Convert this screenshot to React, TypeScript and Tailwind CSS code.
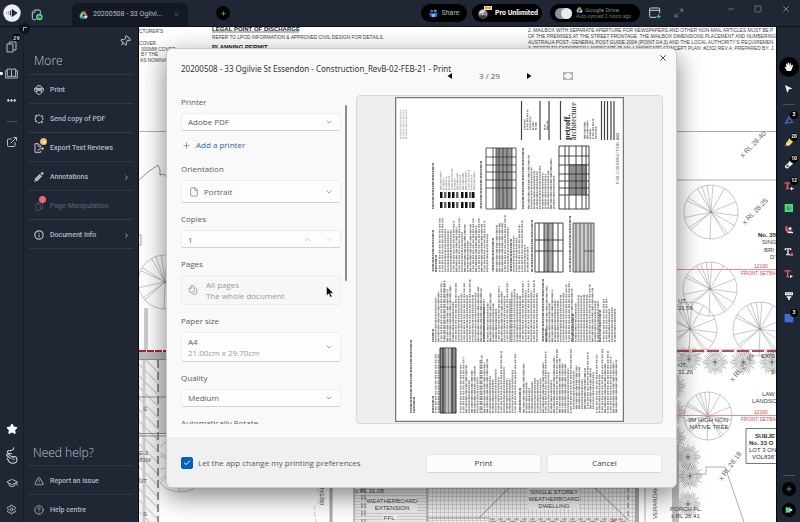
import { useState, type ReactNode } from "react";
import {
  Check, ChevronDown, ChevronRight, ChevronUp, CircleHelp, Ellipsis, ExternalLink, File, Files,
  GraduationCap, Info, Maximize2, Minus, Pin, Plus, Settings, Square, Star, TriangleAlert, X,
} from "lucide-react";

const DOC_NAME = "20200508 - 33 Ogilvie St Essendon - Construction_RevB-02-FEB-21";

/* Small drawn icons */

function DriveIcon({ className }: { className: string }) {
  return (
    <svg viewBox="0 0 30 27" className={className} aria-hidden="true">
      <path d="M10 1h10l-5 9z" fill="#35b46a" />
      <path d="M10 1l5 9-9 16-5-9z" fill="#58d98b" />
      <path d="M20 1l9 16H19l-6-10z" fill="#e8615f" />
      <path d="M11 17h18l-5 9H6z" fill="#4e8df5" />
      <path d="M19 17h10l-5 9-6-5z" fill="#f3dede" />
    </svg>
  );
}

function LogoIcon() {
  return (
    <svg viewBox="0 0 54 54" className="size-[18px]" aria-hidden="true">
      <circle cx="27" cy="27" r="26" fill="#eef0f4" />
      <path d="M11 24v6M16 21v12" stroke="#a3aaba" strokeWidth="3" />
      <path d="M20 23l5-7v22l-5-7z" fill="#3b4770" />
      <path d="M27 15l17 12-17 12z" fill="#101a38" />
      <path d="M32 24l5 3-5 3z" fill="#5f6c92" />
    </svg>
  );
}

function HomeDocIcon() {
  return (
    <svg viewBox="0 0 36 36" className="size-3" fill="none" aria-hidden="true">
      <path d="M15 32H8a4 4 0 0 1-4-4V10l7-7h13a4 4 0 0 1 4 4v7" stroke="#c9ced8" strokeWidth="3" />
      <path d="M4 11h8V4" stroke="#c9ced8" strokeWidth="2" />
      <circle cx="25" cy="24" r="10" fill="#4fd886" />
      <path d="M20 24h9M25 20l4 4-4 4" stroke="#14251c" strokeWidth="3" />
    </svg>
  );
}

function PagesIcon({ className }: { className: string }) {
  return (
    <svg viewBox="0 0 36 36" className={className} fill="none" stroke="currentColor" strokeWidth="3" strokeLinejoin="round" aria-hidden="true">
      <path d="M3 9h18v24H3z" />
      <path d="M10 9V3h20v24h-9" />
    </svg>
  );
}

function ReaderIcon() {
  return (
    <svg viewBox="0 0 39 33" className="h-[11px] w-[13px]" fill="none" stroke="currentColor" strokeWidth="3" strokeLinejoin="round" aria-hidden="true">
      <path d="M7 3h9c2 0 3 1 3.500 3C20 4 21 3 23 3h9v22h-9c-2 0-3 1-3.500 2-.5-1-1.500-2-3.500-2H7zM19.500 6v20" />
      <path d="M6 8H2v22h14l3.500 1 3.500-1h14V8h-4" />
    </svg>
  );
}

function PrintIcon() {
  return (
    <svg viewBox="0 0 30 30" className="size-[10px]" fill="none" stroke="#c3c8d1" strokeWidth="3" aria-hidden="true">
      <path d="M6 9c1-5 4-7 9-7s8 2 9 7" />
      <path d="M2 10h26v7c0 2-1 3-3 3H5c-2 0-3-1-3-3z" />
      <path d="M8 17h14v6c-1 4-3 5-7 5s-6-1-7-5z" fill="#1f2735" />
      <path d="M5 13h20" />
    </svg>
  );
}

function SendIcon() {
  return (
    <svg viewBox="0 0 30 30" className="size-[10px]" fill="none" stroke="#c3c8d1" strokeWidth="3" aria-hidden="true">
      <path d="M10 4a12 12 0 0 1 9 0M26 11a12 12 0 0 1 0 8M19 26a12 12 0 0 1-8 0M4 18a12 12 0 0 1 1-9" />
      <circle cx="7" cy="6" r="2" fill="#c3c8d1" />
      <circle cx="24" cy="7" r="2" fill="#c3c8d1" />
      <circle cx="23" cy="24" r="2" fill="#c3c8d1" />
      <circle cx="6" cy="22" r="2" fill="#c3c8d1" />
    </svg>
  );
}

function ExportIcon() {
  return (
    <svg viewBox="0 0 30 30" className="size-[10px]" fill="none" stroke="#c3c8d1" strokeWidth="3" aria-hidden="true">
      <path d="M20 13V9l-7-7H3v26h17v-4" />
      <path d="M12 3v8h8" strokeWidth="2" />
      <path d="M12 24c1-5 4-7 9-7h7M24 12l5 5-5 5" />
    </svg>
  );
}

function PenIcon() {
  return (
    <svg viewBox="0 0 30 30" className="size-[10px]" aria-hidden="true">
      <path d="M1 29l3-10L17 6l7 7-13 13z" fill="#c3c8d1" />
      <path d="M19 4c3-3 6-4 9-3 1 3 0 6-3 9z" fill="#c3c8d1" />
      <path d="M4 26L19 11" stroke="#1f2735" strokeWidth="1" />
    </svg>
  );
}

function GestureIcon() {
  return (
    <svg viewBox="0 0 38 50" className="h-[17px] w-[13px]" fill="none" stroke="#d5d8de" strokeWidth="3" strokeLinecap="round" strokeLinejoin="round" aria-hidden="true">
      <path d="M25 2c1 7-4 8-10 8-7 0-10 3-8 7 2 3 8 2 12 2" />
      <path d="M15 33L5 25c-2-3 1-5 4-4l11 8 8-1c5 1 7 4 7 9 0 7-5 11-12 11-7 0-11-3-13-8l-4-7" />
      <path d="M19 34l6-3M23 38l5-2" strokeWidth="2" />
    </svg>
  );
}

function HandIcon() {
  return (
    <svg viewBox="0 0 30 30" className="size-[10px]" aria-hidden="true">
      <path d="M9 27C6 22 3 19 2 15c1-2 3-1 5 2L6 7c0-3 3-3 4 0l1 5V4c0-3 4-3 4 0v8l2-7c1-3 4-2 4 1l-1 8 3-5c1-2 4-1 4 1-1 6-3 12-6 17z" fill="#f3f4f6" />
    </svg>
  );
}

function PointerIcon() {
  return (
    <svg viewBox="0 0 30 30" className="size-[10px]" aria-hidden="true">
      <path d="M3 3l23 11-11 2-5 11z" fill="#f3f4f6" />
    </svg>
  );
}

/* Right-hand tool glyphs, all on a 30 x 30 grid */
const TOOLS: { name: string; count?: string; draw: ReactNode }[] = [
  { name: "Shapes", count: "3", draw: <path d="M3 25L15 5l11 17zM11 22c-1-6 3-10 9-8" fill="none" stroke="#4a73cf" strokeWidth="3" strokeLinejoin="round" /> },
  { name: "Highlight", count: "20", draw: <><path d="M8 17l8-13 11 10-9 10z" fill="#f5d94f" /><path d="M8 16l10 8-4 3-9-5z" fill="#f4f4f4" /><path d="M1 28l4-6 7 4z" fill="#e8615f" /></> },
  { name: "Eraser", count: "10", draw: <><path d="M3 21L18 6l9 8-15 14c-4 2-11-2-9-7z" fill="#f4f4f4" /><path d="M9 16l9 8" stroke="#39425a" strokeWidth="2" /><circle cx="10" cy="22" r="3" fill="#39425a" /></> },
  { name: "Insert text", count: "12", draw: <><path d="M2 4h17v6h-2l-1-3h-3v15h3v3H5v-3h3V7H5l-1 3H2z" fill="#e8615f" /><path d="M18 23h11M23 18v10" stroke="#f4f4f4" strokeWidth="3" /></> },
  { name: "Note", draw: <><path d="M2 3h25v24H2z" fill="#4fd886" /><path d="M8 9l5 4 6-5M9 20h10M13 13v7M6 15h4M18 15h5" fill="none" stroke="#1d5a38" strokeWidth="2" /></> },
  { name: "Draw", draw: <><path d="M5 3h5v8l7 9-5 5L3 14z" fill="#e8615f" /><path d="M12 9l9-3 2 6-5 5zM10 24c5-5 11-5 17-3v4z" fill="#f4f4f4" /></> },
  { name: "Strike text", draw: <><path d="M2 4h20v6h-3l-1-3h-4v15h4v3H6v-3h4V7H6l-1 3H2z" fill="#f4f4f4" /><path d="M19 20l8-3v10h-9z" fill="#e8615f" /></> },
  { name: "Replace text", draw: <><path d="M2 4h18v6h-2l-1-3h-4v15h3v3H6v-3h3V7H5l-1 3H2z" fill="#e8615f" /><path d="M18 18l9 4-9 5z" fill="#f4f4f4" /></> },
  { name: "Callout", draw: <><path d="M3 4h24v9H3zM8 16h14v4H8zM12 20h6v6h-6z" fill="#f4f4f4" /><path d="M7 8h4M14 8h4M20 8h4" stroke="#39425a" strokeWidth="2" /></> },
  { name: "Stamp", count: "3", draw: <path d="M2 3h26v25H2z" fill="#3c6fd6" /> },
];

/* Site plan behind the dialog */

const SPOKES = [8, 30, 52, 58, 92, 138, 144, 168, 205, 212, 240, 250, 262, 274, 300, 338];

function Tree({ x, y, r }: { x: number; y: number; r: number }) {
  return (
    <g stroke="#a3a3a3" strokeWidth="0.6" fill="none">
      <circle cx={x} cy={y} r={r} />
      {SPOKES.map(a => {
        const t = (a * Math.PI) / 180;
        return <path key={a} d={`M${x} ${y}L${x + r * Math.cos(t)} ${y + r * Math.sin(t)}`} />;
      })}
      <circle cx={x} cy={y} r="1" fill="#777" />
    </g>
  );
}

function Shrub({ x, y }: { x: number; y: number }) {
  return (
    <g stroke="#8a8a8a" strokeWidth="0.6">
      {Array.from({ length: 36 }, (_, i) => {
        const t = (i * Math.PI) / 18;
        const r = i % 3 === 0 ? 13 : i % 2 ? 12 : 10;
        const r0 = i % 2 ? 6 : 2;
        return <path key={i} d={`M${x + r0 * Math.cos(t)} ${y + r0 * Math.sin(t)}L${x + r * Math.cos(t)} ${y + r * Math.sin(t)}`} />;
      })}
      <circle cx={x} cy={y} r="1.5" fill="#777" />
    </g>
  );
}

function SitePlan() {
  return (
    <svg viewBox="139 27 637 495" preserveAspectRatio="xMinYMin slice" className="block size-full bg-white" style={{ fontFamily: '"Liberation Sans", sans-serif' }} role="img" aria-label="Site plan">
      <defs>
        <pattern id="hatch" width="8" height="8" patternUnits="userSpaceOnUse" patternTransform="rotate(-45)">
          <path d="M0 0V8" stroke="#8a8a8a" strokeWidth="1" />
        </pattern>
        <pattern id="deck" width="4" height="4" patternUnits="userSpaceOnUse">
          <path d="M0 0V4M0 0H4" stroke="#9a9a9a" strokeWidth="0.7" />
        </pattern>
        <pattern id="boards" width="4" height="3" patternUnits="userSpaceOnUse">
          <path d="M0 0H4" stroke="#b0b0b0" strokeWidth="1" />
        </pattern>
      </defs>

      {/* notes */}
      <g fontSize="4.8" fill="#444">
        <text x="139" y="33">CTURER'S</text>
        <text x="139" y="45">COVER.</text>
        <text x="141" y="51">300MM COVER</text>
        <text x="141" y="56">BY THE</text>
        <text x="140" y="62">AS NOMINATED</text>
        <text x="212" y="31" fontSize="6" fontWeight="bold" fill="#222">LEGAL POINT OF DISCHARGE</text>
        <path d="M212 32H299" stroke="#222" strokeWidth="0.6" />
        <text x="212" y="39">REFER TO LPOD INFORMATION &amp; APPROVED CIVIL DESIGN FOR DETAILS.</text>
        <text x="212" y="49" fontSize="6" fontWeight="bold" fill="#222">PLANNING PERMIT</text>
        <text x="528" y="32">2. MAILBOX WITH SEPARATE APERTURE FOR NEWSPAPERS AND OTHER NON-MAIL ARTICLES MUST BE P</text>
        <text x="528" y="38">OF THE PREMISES AT THE STREET FRONTAGE. THE MAILBOX DIMENSIONS PLACEMENT AND NUMBERING</text>
        <text x="528" y="44">AUSTRALIA POST- GENERAL POST GUIDE 2004 (POINT G4.3) AND THE LOCAL AUTHORITY'S REQUIREMEN</text>
        <text x="528" y="50">3. REFER TO ENDORSED LANDSCAPE PLAN. LANDSCAPE CONCEPT PLAN: #2302 REV A; PREPARED BY: J.</text>
      </g>

      {/* left edge */}
      <g fill="none" stroke="#999">
        <path d="M139 131.500H170M677 131.500H776M677 180H776" strokeWidth="0.8" />
        <path d="M139 180L148 172L158 165L160 170L160 175L164 174L167 178" stroke="#777" strokeWidth="0.8" />
        <path d="M139 235h2v10h-2" />
      </g>
      <Tree x={165} y={282} r={27} />
      <Tree x={180} y={465} r={27} />
      <path d="M144 308h4v43h-4z" fill="#ccc" />
      <path d="M139 352H160V522H139z" fill="#f4f4f4" />
      <path d="M139 352H158V522H139z" fill="url(#hatch)" />
      <path d="M158 360H170V434H158z" fill="#ddd" />
      <path d="M139 352H170V359H139z" fill="#bbb" />
      <path d="M158 360V522" stroke="#333" strokeDasharray="8 4" />
      <path d="M144 360V522" stroke="#ccc" strokeWidth="3" />
      <path d="M139 351H170" stroke="#b3202a" strokeWidth="2" strokeDasharray="7 1" />
      <path d="M139 359.500H170M139 433.500H170M139 436H170M139 397H166" stroke="#777" strokeWidth="0.8" />
      <g fontSize="6" fill="#555">
        <text x="143" y="411">S</text>
        <text x="143" y="516">S</text>
        <text x="139" y="455">E-1</text>
        <text x="139" y="462">83M</text>
        <text x="139" y="483">UT</text>
      </g>

      {/* bottom strip */}
      <path d="M331 487V522" stroke="#aaa" strokeWidth="3" />
      <path d="M317 488L322 498L314 508L316 522" stroke="#aaa" fill="none" strokeWidth="0.6" strokeDasharray="5 2" />
      <text transform="translate(324 505) rotate(-90)" fontSize="6" fill="#444">RETAI</text>
      <path d="M354 485H427V522H354z" fill="#e9e9e9" />
      <path d="M354 485H427V522H354z" fill="url(#boards)" />
      <path d="M427 485H636V522H427z" fill="#efefef" />
      <path d="M427 485H636V522H427z" fill="url(#deck)" />
      <path d="M354 487V522M427 487V522M427 518H490M509 488L479 518M595 488L627 519" stroke="#777" strokeWidth="0.8" />
      <path d="M362 487V522M365 487V522M628 487V519M490 519H628" stroke="#777" strokeDasharray="5 3" />
      <path d="M490 522H628" stroke="#555" strokeDasharray="6 4" />
      <path d="M636 485V522M638 485V522" stroke="#555" />
      <g fill="#ededed">
        <path d="M367 497H417V512H367zM383 514H397V521H383zM528 488H579V509H528z" />
      </g>
      <g fontSize="6" fill="#444">
        <text x="355" y="493">x RL 31.08</text>
        <text x="392" y="503" textAnchor="middle">WEATHERBOARD</text>
        <text x="392" y="510" textAnchor="middle">EXTENSION</text>
        <text x="390" y="520" textAnchor="middle">FFL.</text>
        <text x="554" y="494" textAnchor="middle">SINGLE STOREY</text>
        <text x="554" y="501" textAnchor="middle">WEATHERBOARD</text>
        <text x="554" y="508" textAnchor="middle">DWELLING</text>
        <text transform="translate(657 519) rotate(-90)">VERANDAH</text>
      </g>
      <path d="M611 522L617 519" stroke="#d33" />
      <path d="M645 487V522" stroke="#999" strokeWidth="0.8" />

      {/* right garden */}
      <Tree x={711} y={212} r={27} />
      <Tree x={710} y={289} r={27} />
      <Tree x={690} y={329} r={27} />
      <Tree x={760} y={329} r={27} />
      <Tree x={708} y={416} r={24} />
      <Shrub x={689} y={359} />
      <Shrub x={715} y={362} />
      <Shrub x={743} y={362} />
      <Shrub x={772} y={362} />
      <Shrub x={673} y={386} />
      <Shrub x={673} y={412} />
      <Shrub x={673} y={438} />
      <Shrub x={688} y={457} />
      <Shrub x={690} y={476} />
      <Shrub x={688} y={504} />
      <path d="M672 445H679V522H672z" fill="#bdbdbd" />
      <path d="M677 269.500H776M677 415.500H776" stroke="#f28c8c" strokeWidth="1" />
      <path d="M677 351H776" stroke="#8e1c22" strokeWidth="1.5" strokeDasharray="12 3" />
      <path d="M677 349.500H776" stroke="#f0a0a0" strokeWidth="0.6" />
      <path d="M692 474H706V467H725L744 522" stroke="#999" fill="none" strokeWidth="0.8" />
      <g fontSize="7" fill="#666">
        <text transform="translate(743 158) rotate(-46)">x RL 28.40</text>
        <text transform="translate(745 225) rotate(-46)">x RL 28.25</text>
        <text transform="translate(733 382) rotate(-50)">x RL 27.95</text>
        <text transform="translate(722 481) rotate(-54)">x RL 28.18</text>
      </g>
      <g fontSize="6" fill="#444">
        <text x="678" y="303">UT.</text>
        <text x="678" y="310">31.56</text>
        <text x="678" y="367">UT.</text>
        <text x="678" y="374">31.26</text>
        <text x="758" y="237" fontWeight="bold" fill="#222">No. 35</text>
        <text x="762" y="244">SING</text>
        <text x="764" y="252">BRI</text>
        <text x="770" y="259">D'</text>
        <text x="761" y="358">EXIS</text>
        <text x="771" y="374">S</text>
        <text x="762" y="396">LAW</text>
        <text x="752" y="403">LANDSC</text>
        <text x="709" y="422" textAnchor="middle">3M HIGH NON-</text>
        <text x="709" y="429" textAnchor="middle">NATIVE TREE</text>
        <text x="670" y="511">PORCH FL.</text>
        <text x="671" y="518">x RL 28.41</text>
      </g>
      <path d="M746 428.500H790V463.500H746z" fill="#fff" stroke="#777" />
      <g fontSize="6" fill="#333">
        <text x="755" y="438" fontWeight="bold">SUBJE</text>
        <text x="749" y="445" fontWeight="bold">No. 33 O</text>
        <text x="749" y="452">LOT 3 ON</text>
        <text x="752" y="459">VOL836'</text>
      </g>
      <g fontSize="5" fill="#e2474b">
        <text x="754" y="268">12190</text>
        <text x="741" y="275">FRONT SETBAC</text>
        <text x="754" y="414">12160</text>
        <text x="741" y="421">FRONT SETBAC</text>
      </g>
    </svg>
  );
}

/* Printed sheet in the preview pane: text runs upwards on the page */

type Block = { x: number; w: number; top: number; bottom: number; min?: number; tone?: string };

const BLOCKS: Block[] = [
  { x: 5, w: 8, top: 7, bottom: 42, min: 0.8, tone: "#c8c8c8" },
  { x: 129, w: 14, top: 12, bottom: 33, min: 0.3 },
  { x: 149, w: 4, top: 20, bottom: 33, min: 0.4 },
  { x: 189, w: 12, top: 18, bottom: 42, min: 0.3 },
  { x: 45, w: 34, top: 71, bottom: 93, min: 0.5, tone: "#b8b8b8" },
  { x: 133, w: 26, top: 50, bottom: 112, min: 0.5 },
  { x: 44, w: 50, top: 118, bottom: 175, min: 0.55 },
  { x: 101, w: 12, top: 118, bottom: 175, min: 0.6 },
  { x: 118, w: 15, top: 119, bottom: 175, min: 0.3 },
  { x: 40, w: 10, top: 182, bottom: 245, min: 0.5 },
  { x: 49, w: 40, top: 182, bottom: 245, min: 0.6 },
  { x: 92, w: 24, top: 182, bottom: 245, min: 0.5 },
  { x: 116, w: 28, top: 182, bottom: 245, min: 0.7 },
  { x: 151, w: 26, top: 182, bottom: 245, min: 0.6 },
  { x: 180, w: 24, top: 182, bottom: 245, min: 0.6 },
  { x: 208, w: 14, top: 196, bottom: 245, min: 0.6 },
  { x: 40, w: 3, top: 254, bottom: 316, min: 0.8 },
  { x: 65, w: 20, top: 258, bottom: 316, min: 0.4 },
  { x: 86, w: 34, top: 253, bottom: 316, min: 0.5 },
  { x: 128, w: 22, top: 255, bottom: 316, min: 0.4 },
  { x: 150, w: 28, top: 251, bottom: 316, min: 0.5 },
  { x: 178, w: 22, top: 251, bottom: 312, min: 0.3 },
  { x: 201, w: 22, top: 252, bottom: 316, min: 0.5 },
];

const HEADINGS = [
  [38, 66, 112], [86, 64, 112], [128, 51, 112], [38, 133, 175], [41, 158, 175], [98, 141, 175], [116, 142, 175], [137, 123, 175],
  [175, 119, 175], [38, 232, 245], [89, 210, 245], [148, 182, 245], [151, 232, 245], [178, 217, 245], [205, 213, 245],
  [16, 243, 316], [19, 300, 316], [38, 299, 316], [125, 291, 316],
];

const DASHES = ["2 .7 1 .5 3 .6", "1 .5 2 .7 1.500 .5", "4 .8 1 .6", "1.500 1.200 2 .5"];

function TextBlock({ x, w, top, bottom, min = 0.5, tone = "#8f8f8f" }: Block) {
  const lines = [];
  for (let i = 0; i * 2.8 < w; i++) {
    const k = Math.abs(Math.sin((x + i * 3) * 12.9898 + top) * 43758.5453) % 1;
    const len = (bottom - top) * (min + (1 - min) * k);
    lines.push(<path key={i} d={`M${x + i * 2.8 + 0.7} ${bottom}V${bottom - len}`} strokeDasharray={DASHES[Math.floor(k * 4)]} />);
  }
  return <g stroke={tone} strokeWidth="1.7">{lines}</g>;
}

function Sheet() {
  return (
    <svg viewBox="0 0 229 325" className="block h-[325px] w-auto bg-white" role="img" aria-label="Page 3 preview">
      {BLOCKS.map((b, i) => <TextBlock key={i} {...b} />)}
      {HEADINGS.map(([x, a, b]) => <path key={`${x}-${a}`} d={`M${x} ${a}V${b}`} stroke="#666" strokeWidth="1.6" strokeDasharray="2 .5 1 .5 3 .5" />)}

      <path d="M126.500 4V43M145 4V43M154 4V43M165.500 4V43M206.500 4V43M209.500 4V43M212.500 4V43M216 4V43M219 4V43" stroke="#444" strokeWidth="1.200" />
      <g style={{ fontFamily: '"Liberation Serif", serif' }} fill="#222">
        <text transform="translate(175 43) rotate(-90)" fontSize="8" fontWeight="bold">petroff.</text>
        <text transform="translate(181 43) rotate(-90)" fontSize="8">architecture</text>
      </g>
      <g style={{ fontFamily: '"Liberation Sans", sans-serif' }} fill="#666">
        <text transform="translate(224 87) rotate(-90)" fontSize="4">FOR CONSTRUCTION</text>
        <text transform="translate(224 43) rotate(-90)" fontSize="4" fontWeight="bold">A02</text>
      </g>

      {/* legend swatches */}
      {[45, 49, 53, 57, 61, 66, 70, 74, 77].map((x, i) => (
        <g key={x} fill={i % 3 === 1 ? "#666" : "#111"}>
          <rect x={x} y="95" width="2.500" height="6" />
          <rect x={x} y="105" width="2.500" height="6" />
        </g>
      ))}

      {/* schedules */}
      <path d="M101 51H117V112H101z" fill="#969696" />
      <path d="M91 51H121V112H91zM98 51V112M101 51V112M117 51V112M91 60H121M91 68H121M91 75H121M91 83H121M91 91H121M104 51V112M108 51V112M112 51V112" fill="none" stroke="#333" strokeWidth="0.800" />
      <path d="M174 67H192V98H174z" fill="#909090" />
      <path d="M164 49H194V112H164zM170 49V112M174 49V112M181 49V112M187 49V112M191 49V112M164 59H194M164 68H194M164 77H194M164 84H194M164 91H194M164 98H194" fill="none" stroke="#333" strokeWidth="0.900" />
      <path d="M149 126H158V175H149z" fill="#aaa" />
      <path d="M140 126H168V175H140zM144 126V175M149 126V175M153 126V175M158 126V175M163 126V175M140 143H168M140 154H168" fill="none" stroke="#333" strokeWidth="0.900" />
      <path d="M178 126H199V175H178z" fill="#ccc" />
      <path d="M178 126H199V175H178zM181 126V175M185 126V175M189 126V175M193 126V175M196 126V175M189 154H199" fill="none" stroke="#444" strokeWidth="0.800" />
      <path d="M45 251H61V316H45z" fill="#8a8a8a" />
      <path d="M45 251H61V316H45zM48 251V316M57 251V316M45 270H61" fill="none" stroke="#222" strokeWidth="0.900" />
      <path d="M52 251V316M55 251V316" stroke="#eee" />
      <rect x="0.500" y="0.500" width="228" height="324" fill="none" stroke="#777" strokeWidth="1.500" />
    </svg>
  );
}

/* Window chrome */

function TitleBar() {
  return (
    <header className="flex h-[27px] shrink-0 items-center border-b border-[#0d131d] bg-[#1f2735] text-[#b9bec9]">
      <div className="flex w-[72px] items-center gap-[10px] pl-[3px]">
        <LogoIcon />
        <button aria-label="Home" className="pt-1"><HomeDocIcon /></button>
      </div>
      <div className="flex h-[23px] w-[116px] items-center self-end rounded-t-md bg-[#141a24] px-[7px]">
        <DriveIcon className="h-2 w-[9px]" />
        <span className="ml-[5px] flex-1 text-[7px] whitespace-nowrap">20200508 - 33 Ogilvi...</span>
        <button aria-label="Close tab" className="mr-[1px]"><X className="size-[7px] text-[#697080]" /></button>
      </div>
      <button aria-label="New tab" className="ml-7 flex size-[14px] items-center justify-center rounded-full bg-black">
        <Plus className="size-[7px] text-[#58d98b]" />
      </button>
      <div className="ml-auto flex items-center">
        <button className="flex h-[18px] w-[46px] items-center justify-center gap-1 rounded-full bg-black text-[7px]">
          <svg viewBox="0 0 27 24" className="h-2 w-[9px]" aria-hidden="true">
            <circle cx="8" cy="6" r="4" fill="#3c7be0" /><circle cx="19" cy="6" r="4" fill="#55a4ef" />
            <path d="M1 12h12v11H4zM14 12h12l-3 11h-9z" fill="#2f6fd6" /><path d="M9 15h9v9H9z" fill="#6fc0f5" />
          </svg>
          Share
        </button>
        <button className="ml-[5px] flex h-[18px] w-[70px] items-center gap-[5px] rounded-full bg-black pl-[6px] text-[7px] font-bold whitespace-nowrap text-white">
          <span className="relative flex size-3 items-end">
            <svg viewBox="0 0 33 33" className="size-[11px]" aria-hidden="true">
              <circle cx="15" cy="18" r="14" fill="#8f8f8f" /><path d="M3 16c2-9 10-13 19-8l-8 8z" fill="#ddd" />
              <path d="M4 22h18l4 4c-6 7-16 7-21 1z" fill="#3c3c3c" /><circle cx="13" cy="18" r="4" fill="#c9a29a" />
            </svg>
            <svg viewBox="0 0 24 12" className="absolute -top-[1px] left-[6px] h-1 w-2" aria-hidden="true">
              <path d="M0 0h24v12H0z" fill="#f7e6a0" /><path d="M4 3h6v5H4zM14 3h6v5h-6z" fill="#c06a35" />
            </svg>
          </span>
          Pro Unlimited
        </button>
        <div className="ml-2 flex h-[18px] w-[90px] items-center gap-1 rounded-full bg-black pl-[5px]">
          <button role="switch" aria-checked="true" aria-label="Google Drive sync" className="flex h-[11px] w-[17px] items-center justify-end rounded-full bg-[#8b909b]">
            <span className="size-[11px] rounded-full bg-[#e9ebf0]" />
          </button>
          <div className="leading-[7px] text-[#858a94]">
            <div className="flex items-center gap-[2px] text-[6px]"><DriveIcon className="h-[6px] w-[7px]" />Google Drive</div>
            <div className="text-[5px] text-[#777c86]">Auto-synced 2 hours ago</div>
          </div>
        </div>
        <button aria-label="Add panel" className="ml-[9px]">
          <svg viewBox="0 0 36 36" className="size-3" fill="none" stroke="#c9ced8" strokeWidth="3" aria-hidden="true">
            <path d="M22 31H5a3 3 0 0 1-3-3V6a3 3 0 0 1 3-3h24a3 3 0 0 1 3 3v13M2 10h30" />
            <path d="M29 22v12M23 28h12" stroke="#4fd886" />
          </svg>
        </button>
        <button aria-label="Expand" className="ml-[13px]"><Maximize2 className="size-[10px] text-[#7d8594]" strokeWidth={2} /></button>
        <div className="mb-2 ml-[43px] flex items-center gap-[19px] pr-[9px] text-[#8b92a3]">
          <button aria-label="Minimize"><Minus className="size-2" /></button>
          <button aria-label="Maximize"><Square className="size-2" /></button>
          <button aria-label="Close window"><X className="size-[10px]" /></button>
        </div>
      </div>
    </header>
  );
}

function LeftRail() {
  return (
    <nav aria-label="Views" className="relative -mb-[1px] flex w-6 shrink-0 flex-col items-center border-r border-[#171e2a] pt-[6px] text-[#b4bac5]">
      <button aria-label="Pages" className="relative flex h-[27px] w-full items-center justify-center">
        <PagesIcon className="size-3" />
        <span className="absolute top-[1px] right-[2px] rounded-full bg-black px-[1px] text-[6px] leading-[7px] font-bold text-[#d5d8de]">29</span>
      </button>
      <button aria-label="Reader" className="relative flex h-[27px] w-full items-center justify-center">
        <span className="absolute left-0 size-[3px] rounded-r-full bg-white" />
        <ReaderIcon />
      </button>
      <button aria-label="More" className="flex h-[27px] w-full items-center justify-center text-white"><Ellipsis className="size-[11px]" strokeWidth={3} /></button>
      <hr className="mt-[7px] w-[10px] border-[#4a5160]" />
      <button aria-label="Open in new window" className="mt-[6px] flex h-[27px] w-full items-center justify-center"><ExternalLink className="size-3" /></button>
      <div className="mt-auto flex w-full flex-col">
        <button aria-label="Favourites" className="flex h-[27px] items-center justify-center"><Star className="size-3 fill-white text-white" /></button>
        <button aria-label="Gestures" className="flex h-[27px] items-center justify-center"><GestureIcon /></button>
        <button aria-label="Learn" className="flex h-[27px] items-center justify-center"><GraduationCap className="size-3" /></button>
        <button aria-label="Settings" className="flex h-[27px] items-center justify-center"><Settings className="size-[11px]" /></button>
      </div>
      <span className="absolute -top-1 -right-[7px] z-10 flex size-[11px] items-center justify-center rounded-full bg-[#0f151e]">
        <span className="size-1 border-t border-l border-[#4fd886]" />
      </span>
    </nav>
  );
}

function MenuRow({ icon, label, arrow, dim }: { icon: ReactNode; label: string; arrow?: boolean; dim?: boolean }) {
  return (
    <button disabled={dim} className={`flex h-[29px] w-full items-center gap-[6px] border-t border-[#303847] pt-[2px] pl-[5px] text-left text-[7px] font-medium ${dim ? "text-[#535b69]" : "text-[#b4b9c3]"}`}>
      <span className="relative flex size-[10px] items-center justify-center">{icon}</span>
      <span className="flex-1">{label}</span>
      {arrow && <ChevronRight className="mr-[3px] size-[7px]" strokeWidth={3} />}
    </button>
  );
}

function MorePanel() {
  return (
    <aside className="-mb-[1px] flex w-[115px] shrink-0 flex-col border-r border-[#05080d] px-[5px]">
      <button aria-label="Pin panel" className="mt-2 mr-[2px] self-end"><Pin className="size-3 rotate-45 text-[#aab0bc]" /></button>
      <h2 className="mt-1 mb-1 pl-[5px] text-[12px] leading-[19px] font-light text-[#bfc4cd]" style={{ fontFamily: '"Open Sans", sans-serif' }}>More</h2>
      <MenuRow icon={<PrintIcon />} label="Print" />
      <MenuRow icon={<SendIcon />} label="Send copy of PDF" />
      <MenuRow
        icon={<><ExportIcon /><span className="absolute -top-[5px] left-[6px] flex size-[7px] items-center justify-center rounded-full bg-[#f3b84a]"><Star className="size-1 fill-white text-white" /></span></>}
        label="Export Text Reviews"
      />
      <MenuRow icon={<PenIcon />} label="Annotations" arrow />
      <MenuRow icon={<><PagesIcon className="size-[9px]" /><span className="absolute -top-[5px] left-[5px] size-[7px] rounded-full bg-[#ee6a6d]" /></>} label="Page Manipulation" dim />
      <MenuRow icon={<Info className="size-[10px]" strokeWidth={3} />} label="Document Info" arrow />
      <hr className="border-[#303847]" />
      <h2 className="mt-auto mb-[3px] pl-1 text-[12px] leading-[19px] font-light text-[#bfc4cd]" style={{ fontFamily: '"Open Sans", sans-serif' }}>Need help?</h2>
      <MenuRow icon={<TriangleAlert className="size-[10px]" />} label="Report an issue" />
      <MenuRow icon={<CircleHelp className="size-[10px]" />} label="Help centre" />
    </aside>
  );
}

function RightRail() {
  return (
    <nav aria-label="Tools" className="flex w-6 shrink-0 flex-col items-center border-l border-[#05080d] pt-[30px]">
      <button aria-label="Hand" className="flex size-5 items-center justify-center rounded-full bg-black"><HandIcon /></button>
      <button aria-label="Select" className="mt-[1px] flex h-[22px] items-center"><PointerIcon /></button>
      <hr className="my-1 w-3 border-[#4a5160]" />
      {TOOLS.map(t => (
        <button key={t.name} aria-label={t.name} className="relative flex h-[22px] w-full items-center justify-center">
          <svg viewBox="0 0 30 30" className="size-[10px]" aria-hidden="true">{t.draw}</svg>
          {t.count && <span className="absolute top-[2px] right-[2px] flex size-2 items-center justify-center rounded-full bg-black text-[5px] font-bold text-white">{t.count}</span>}
        </button>
      ))}
      <hr className="mt-auto mb-[6px] w-3 border-[#4a5160]" />
      <button aria-label="Add tool" className="mb-[7px] flex size-[14px] items-center justify-center rounded-full bg-black"><Plus className="size-2 text-[#4fd886]" /></button>
      <button aria-label="Plugins" className="mb-[5px] flex size-[14px] items-center justify-center rounded-full bg-black">
        <svg viewBox="0 0 24 24" className="size-2" aria-hidden="true"><path d="M2 3l10 2v-4l3 5 8 6-8 6-3 5v-4L2 21z" fill="#58d98b" /><path d="M16 8l7 4-7 4z" fill="#fff" /></svg>
      </button>
    </nav>
  );
}

/* Print dialog */

const FIELD = "relative flex items-center rounded-[3px] border border-[#eeeeee] border-b-[#d2d2d2] bg-[#fdfdfd]";

function Label({ id, children }: { id: string; children: ReactNode }) {
  return <label htmlFor={id} className="mb-[5px] block leading-3">{children}</label>;
}

function Chevron() {
  return <ChevronDown className="pointer-events-none absolute right-[7px] size-2 text-[#777]" />;
}

function PrintDialog() {
  const [copies, setCopies] = useState(1);
  const [prefs, setPrefs] = useState(true);

  return (
    <section role="dialog" aria-label="Print" className="w-[511px] max-w-full overflow-hidden rounded-md border border-[#c9c9c9] bg-[#f9f9f9] text-[8px] text-[#5c5c5c] shadow-[0_8px_26px_rgba(0,0,0,0.5)]" style={{ fontFamily: '"Open Sans", sans-serif' }}>
      <div className="flex h-[46px] pr-[8px] pl-[14px]">
        <h1 className="relative z-10 mt-[14px] h-3 w-[262px] leading-3 whitespace-nowrap text-[#333]" style={{ fontFamily: '"Noto Sans", sans-serif' }}>{DOC_NAME} - Print</h1>
        <div className="mt-[21px] flex h-3 items-center text-[#555]">
          <button aria-label="Previous page" className="ml-1"><svg viewBox="0 0 10 12" className="h-[6px] w-[5px]"><path d="M10 0v12L1 6z" fill="#111" /></svg></button>
          <span className="w-[75px] text-center leading-3">3 / 29</span>
          <button aria-label="Next page"><svg viewBox="0 0 10 12" className="h-[6px] w-[5px]"><path d="M0 0v12l9-6z" fill="#111" /></svg></button>
          <button aria-label="Fit to page" className="ml-[31px]">
            <svg viewBox="0 0 30 24" className="h-2 w-[10px]" fill="none" stroke="#777" strokeWidth="2"><path d="M1 1h28v22H1z" /><path d="M5 9V5h5M20 5h5v4M25 15v4h-5M10 19H5v-4" /></svg>
          </button>
        </div>
        <button aria-label="Close" className="mt-[3px] ml-auto flex h-3 items-center"><X className="size-[10px] text-[#333]" strokeWidth={2} /></button>
      </div>

      <div className="flex pr-[13px] pl-[14px]">
        <div className="w-[160px] overflow-hidden pt-[1px] [contain:size]">
          <div className="flex flex-col gap-[10px]">
            <div>
              <Label id="printer">Printer</Label>
              <div className={FIELD}>
                <select id="printer" className="h-4 w-full appearance-none px-[6px] outline-none"><option>Adobe PDF</option></select>
                <Chevron />
              </div>
              <button className="mt-2 mb-[2px] flex items-center gap-[5px] pl-[1px] leading-3 text-[#2a62ad]"><Plus className="size-[9px]" strokeWidth={1.5} />Add a printer</button>
            </div>
            <div>
              <Label id="orientation">Orientation</Label>
              <div className={FIELD}>
                <File className="pointer-events-none absolute left-[7px] size-[10px] text-[#666]" strokeWidth={1.5} />
                <select id="orientation" className="h-[21px] w-full appearance-none pl-[22px] outline-none"><option>Portrait</option><option>Landscape</option></select>
                <Chevron />
              </div>
            </div>
            <div>
              <Label id="copies">Copies</Label>
              <div className={`${FIELD} border-b-[#a0a0a0]`}>
                <input id="copies" value={copies} onChange={e => setCopies(Number(e.target.value) || 1)} className="h-4 min-w-0 flex-1 px-[6px] outline-none" />
                <button aria-label="More copies" onClick={() => setCopies(copies + 1)}><ChevronUp className="size-[9px] text-[#999]" strokeWidth={1.5} /></button>
                <button aria-label="Fewer copies" disabled={copies === 1} onClick={() => setCopies(copies - 1)} className="mr-[6px] ml-[13px]"><ChevronDown className="size-[9px] text-[#c0c0c0]" strokeWidth={1.5} /></button>
              </div>
            </div>
            <div>
              <Label id="pages">Pages</Label>
              <div className="relative flex h-[30px] items-center gap-2 rounded-[3px] border border-[#ececec] bg-[#f7f7f7] pl-[6px] text-[#999]">
                <Files className="size-[10px] -scale-x-100" />
                <div className="leading-[11px]"><div>All pages</div><div>The whole document</div></div>
                <select id="pages" className="absolute inset-0 size-full cursor-default opacity-0"><option>All pages</option></select>
                <svg viewBox="0 0 20 32" className="pointer-events-none absolute top-[10px] right-[6px] h-3 w-2" aria-hidden="true"><path d="M1 1v25l6-6 4 10 4-2-4-9h8z" fill="#000" stroke="#fff" /></svg>
              </div>
            </div>
            <div>
              <Label id="paper">Paper size</Label>
              <div className={`${FIELD} h-[30px] pl-[6px]`}>
                <div className="leading-[11px]"><div>A4</div><div className="text-[#999]">21.00cm x 29.70cm</div></div>
                <select id="paper" className="absolute inset-0 size-full opacity-0"><option>A4</option></select>
                <Chevron />
              </div>
            </div>
            <div>
              <Label id="quality">Quality</Label>
              <div className={FIELD}>
                <select id="quality" className="h-4 w-full appearance-none px-[6px] outline-none"><option>Medium</option></select>
                <Chevron />
              </div>
            </div>
            <div>
              <Label id="rotate">Automatically Rotate</Label>
              <div className={FIELD}><select id="rotate" className="h-4 w-full appearance-none px-[6px]"><option>On</option></select></div>
            </div>
          </div>
        </div>
        <div className="mt-[10px] ml-1 h-[176px] w-[2px] rounded-full bg-[#8d8d8d]" />
        <div className="ml-[9px] flex flex-1 justify-center rounded border border-[#d9d9d9] bg-[#eeeeee] pt-[1px] pb-[1px]"><Sheet /></div>
      </div>

      <footer className="mt-[14px] flex h-[49px] items-center border-t border-[#e8e8e8] bg-[#f0f0f0] px-[14px]">
        <label className="flex flex-1 items-center gap-[5px]">
          <span className="relative flex size-3 items-center justify-center">
            <input type="checkbox" checked={prefs} onChange={e => setPrefs(e.target.checked)} className="size-3 appearance-none rounded-[2px] border border-[#005fb8] checked:bg-[#0560b8]" />
            {prefs && <Check className="pointer-events-none absolute size-2 text-white" strokeWidth={3} />}
          </span>
          Let the app change my printing preferences
        </label>
        <div className="grid w-[236px] grid-cols-2 gap-[6px] text-[#444]">
          <button className="h-[19px] rounded-[3px] border border-[#e6e6e6] border-b-[#d4d4d4] bg-[#fcfcfc]">Print</button>
          <button className="h-[19px] rounded-[3px] border border-[#e6e6e6] border-b-[#d4d4d4] bg-[#fcfcfc]">Cancel</button>
        </div>
      </footer>
    </section>
  );
}

export default function App() {
  return (
    <div className="flex h-screen flex-col overflow-hidden bg-[#1f2735]" style={{ fontFamily: 'Roboto, "Open Sans", sans-serif' }}>
      <TitleBar />
      <div className="flex min-h-0 flex-1">
        <LeftRail />
        <MorePanel />
        <main className="relative min-w-0 flex-1 overflow-hidden">
          <SitePlan />
          <div className="absolute inset-0 flex items-start justify-center pt-[21px] pr-[72px]"><PrintDialog /></div>
        </main>
        <RightRail />
      </div>
    </div>
  );
}
